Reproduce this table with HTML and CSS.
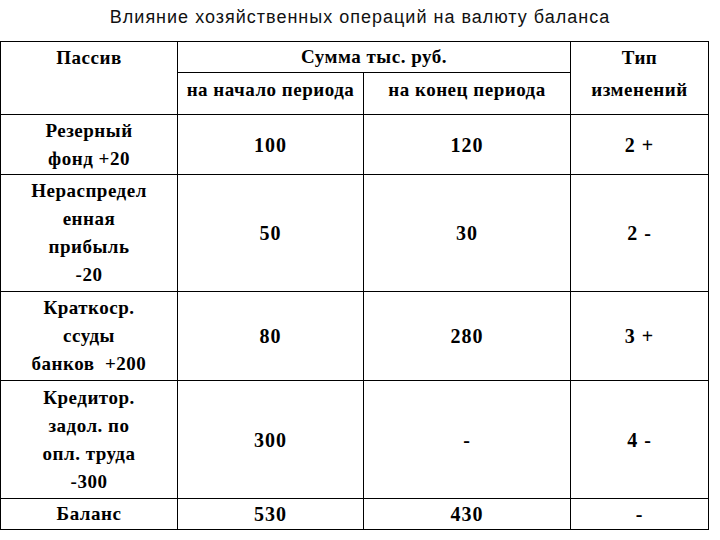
FILE: index.html
```html
<!DOCTYPE html>
<html>
<head>
<meta charset="utf-8">
<title>Влияние хозяйственных операций на валюту баланса</title>
<link rel="stylesheet" href="styles.css">
</head>
<body>
<h1 class="title">Влияние хозяйственных операций на валюту баланса</h1>
<div class="sheet">
  <div class="cell head span-rows">Пассив</div>
  <div class="cell head span-cols">Сумма тыс. руб.</div>
  <div class="cell head span-rows">Тип<br>изменений</div>
  <div class="cell sub">на начало периода</div>
  <div class="cell sub">на конец периода</div>

  <div class="cell">Резерный<br>фонд +20</div>
  <div class="cell num">100</div>
  <div class="cell num">120</div>
  <div class="cell num">2 +</div>

  <div class="cell">Нераспредел<br>енная<br>прибыль<br>-20</div>
  <div class="cell num">50</div>
  <div class="cell num">30</div>
  <div class="cell num">2 -</div>

  <div class="cell">Краткоср.<br>ссуды<br>банков&nbsp; +200</div>
  <div class="cell num">80</div>
  <div class="cell num">280</div>
  <div class="cell num">3 +</div>

  <div class="cell">Кредитор.<br>задол. по<br>опл. труда<br>-300</div>
  <div class="cell num">300</div>
  <div class="cell num">-</div>
  <div class="cell num">4 -</div>

  <div class="cell">Баланс</div>
  <div class="cell num">530</div>
  <div class="cell num">430</div>
  <div class="cell num">-</div>
</div>
</body>
</html>
```

FILE: styles.css
```css
html, body {
  margin: 0;
  padding: 0;
  background: #ffffff;
}

.title {
  margin: 0;
  padding-top: 7px;
  height: 34px;
  box-sizing: border-box;
  text-align: center;
  font-family: "Liberation Sans", Arial, sans-serif;
  font-weight: normal;
  font-size: 18px;
  letter-spacing: 1px;
  line-height: 21px;
  color: #111111;
  width: 720px;
}

.sheet {
  margin-top: 7px;
  width: 709px;
  box-sizing: border-box;
  display: grid;
  grid-template-columns: 176px 185px 206px 137px;
  grid-template-rows: 30px 41px 59px 116px 88px 117px 30px;
  gap: 1px;
  padding: 1px;
  background: #000000;
  color: #000000;
}

.cell {
  background: #ffffff;
  display: flex;
  align-items: center;
  justify-content: center;
  text-align: center;
  font-family: "Liberation Serif", "Times New Roman", serif;
  font-weight: bold;
  font-size: 19px;
  letter-spacing: 0.5px;
  line-height: 28px;
}

.head {
  line-height: 30px;
  align-items: flex-start;
}

.span-rows {
  grid-row: span 2;
  line-height: 32px;
}

.span-cols {
  grid-column: span 2;
}

.sub {
  align-items: flex-start;
  padding-top: 3px;
}

.num {
  font-size: 20px;
  letter-spacing: 1px;
}
```
